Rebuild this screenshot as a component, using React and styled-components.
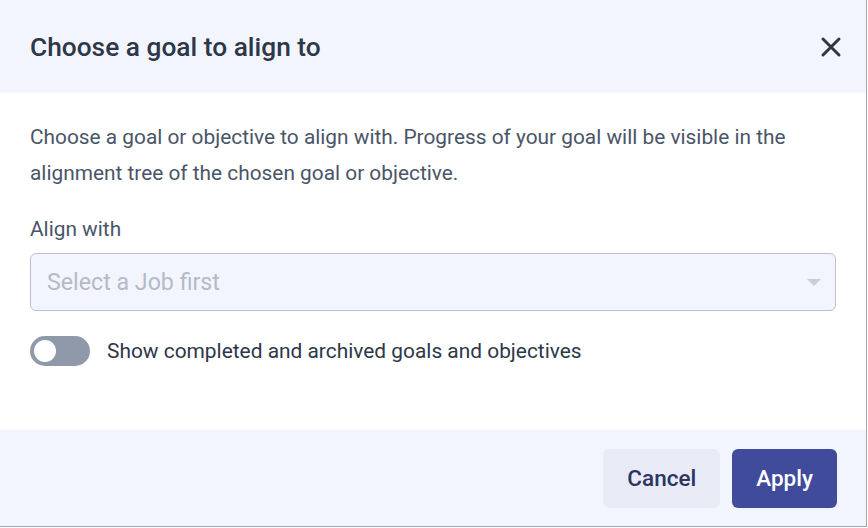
import React, { useState } from "react";
import styled, { createGlobalStyle } from "styled-components";

const GlobalStyle = createGlobalStyle`
  html, body {
    margin: 0;
    padding: 0;
    background: #ffffff;
  }
  body {
    font-family: Roboto, "Liberation Sans", sans-serif;
    -webkit-font-smoothing: antialiased;
  }
`;

const Modal = styled("div")`
  width: 866px;
  height: 526px;
  display: flex;
  flex-direction: column;
  background: #ffffff;
  border-right: 1px solid #a3a7b0;
  border-bottom: 1px solid #a3a7b0;
`;

const Header = styled("div")`
  height: 93px;
  flex: 0 0 auto;
  display: flex;
  align-items: center;
  justify-content: space-between;
  padding: 0 22px 0 30px;
  background: #f2f5fd;
`;

const Title = styled("h2")`
  margin: 0;
  font-size: 26.3px;
  font-weight: 500;
  color: #2d3748;
`;

const CloseButton = styled("button")`
  width: 26px;
  height: 26px;
  padding: 0;
  border: 0;
  background: transparent;
  display: flex;
  align-items: center;
  justify-content: center;
  cursor: pointer;
`;

const Body = styled("div")`
  flex: 1 1 auto;
  padding: 26px 30px 0 30px;
`;

const Description = styled("p")`
  margin: 0;
  font-size: 20.85px;
  line-height: 36px;
  color: #4a5568;
`;

const Label = styled("div")`
  margin-top: 26px;
  font-size: 20.85px;
  line-height: 24px;
  color: #4a5568;
`;

const SelectBox = styled("div")`
  margin-top: 12px;
  height: 56px;
  display: flex;
  align-items: center;
  justify-content: space-between;
  padding: 0 16px;
  background: #f2f5fd;
  border: 1px solid #bcc1cc;
  border-radius: 6px;
  font-size: 23.2px;
  color: #b4bac6;
`;

const Caret = styled("span")`
  width: 0;
  height: 0;
  margin-right: -2px;
  border-left: 7px solid transparent;
  border-right: 7px solid transparent;
  border-top: 7px solid #c9cdd5;
`;

const ToggleRow = styled("label")`
  margin-top: 25px;
  display: flex;
  align-items: center;
  gap: 17px;
  font-size: 20.9px;
  color: #2d3748;
  cursor: pointer;
`;

const Track = styled("span")`
  position: relative;
  width: 60px;
  height: 30px;
  border-radius: 15px;
  background: ${p => (p.$on ? "#414b9c" : "#8f99a9")};
  flex: 0 0 auto;
`;

const Knob = styled("span")`
  position: absolute;
  top: 4px;
  left: ${p => (p.$on ? "34px" : "4px")};
  width: 22px;
  height: 22px;
  border-radius: 50%;
  background: #ffffff;
`;

const Footer = styled("div")`
  height: 96px;
  flex: 0 0 auto;
  display: flex;
  align-items: center;
  justify-content: flex-end;
  gap: 12px;
  padding: 0 29px 0 30px;
  background: #f2f5fd;
`;

const Button = styled("button")`
  height: 59px;
  padding: 0 24px;
  border: 0;
  border-radius: 6px;
  font-family: Roboto, "Liberation Sans", sans-serif;
  font-size: 22.5px;
  font-weight: 500;
  background: ${p => (p.$primary ? "#414b9c" : "#e8ebf6")};
  color: ${p => (p.$primary ? "#ffffff" : "#2b3462")};
  cursor: pointer;
`;

const App = () => {
  const [showAll, setShowAll] = useState(false);

  return (
    <>
      <GlobalStyle />
      <Modal>
        <Header>
          <Title>Choose a goal to align to</Title>
          <CloseButton aria-label="Close">
            <svg width="22" height="22" viewBox="0 0 22 22">
              <path
                d="M3 3 L19 19 M19 3 L3 19"
                stroke="#2d3748"
                strokeWidth="3"
                strokeLinecap="round"
              />
            </svg>
          </CloseButton>
        </Header>
        <Body>
          <Description>
            Choose a goal or objective to align with. Progress of your goal
            will be visible in the alignment tree of the chosen goal or
            objective.
          </Description>
          <Label>Align with</Label>
          <SelectBox>
            <span>Select a Job first</span>
            <Caret />
          </SelectBox>
          <ToggleRow onClick={() => setShowAll(!showAll)}>
            <Track $on={showAll}>
              <Knob $on={showAll} />
            </Track>
            Show completed and archived goals and objectives
          </ToggleRow>
        </Body>
        <Footer>
          <Button>Cancel</Button>
          <Button $primary>Apply</Button>
        </Footer>
      </Modal>
    </>
  );
};

export default App;
